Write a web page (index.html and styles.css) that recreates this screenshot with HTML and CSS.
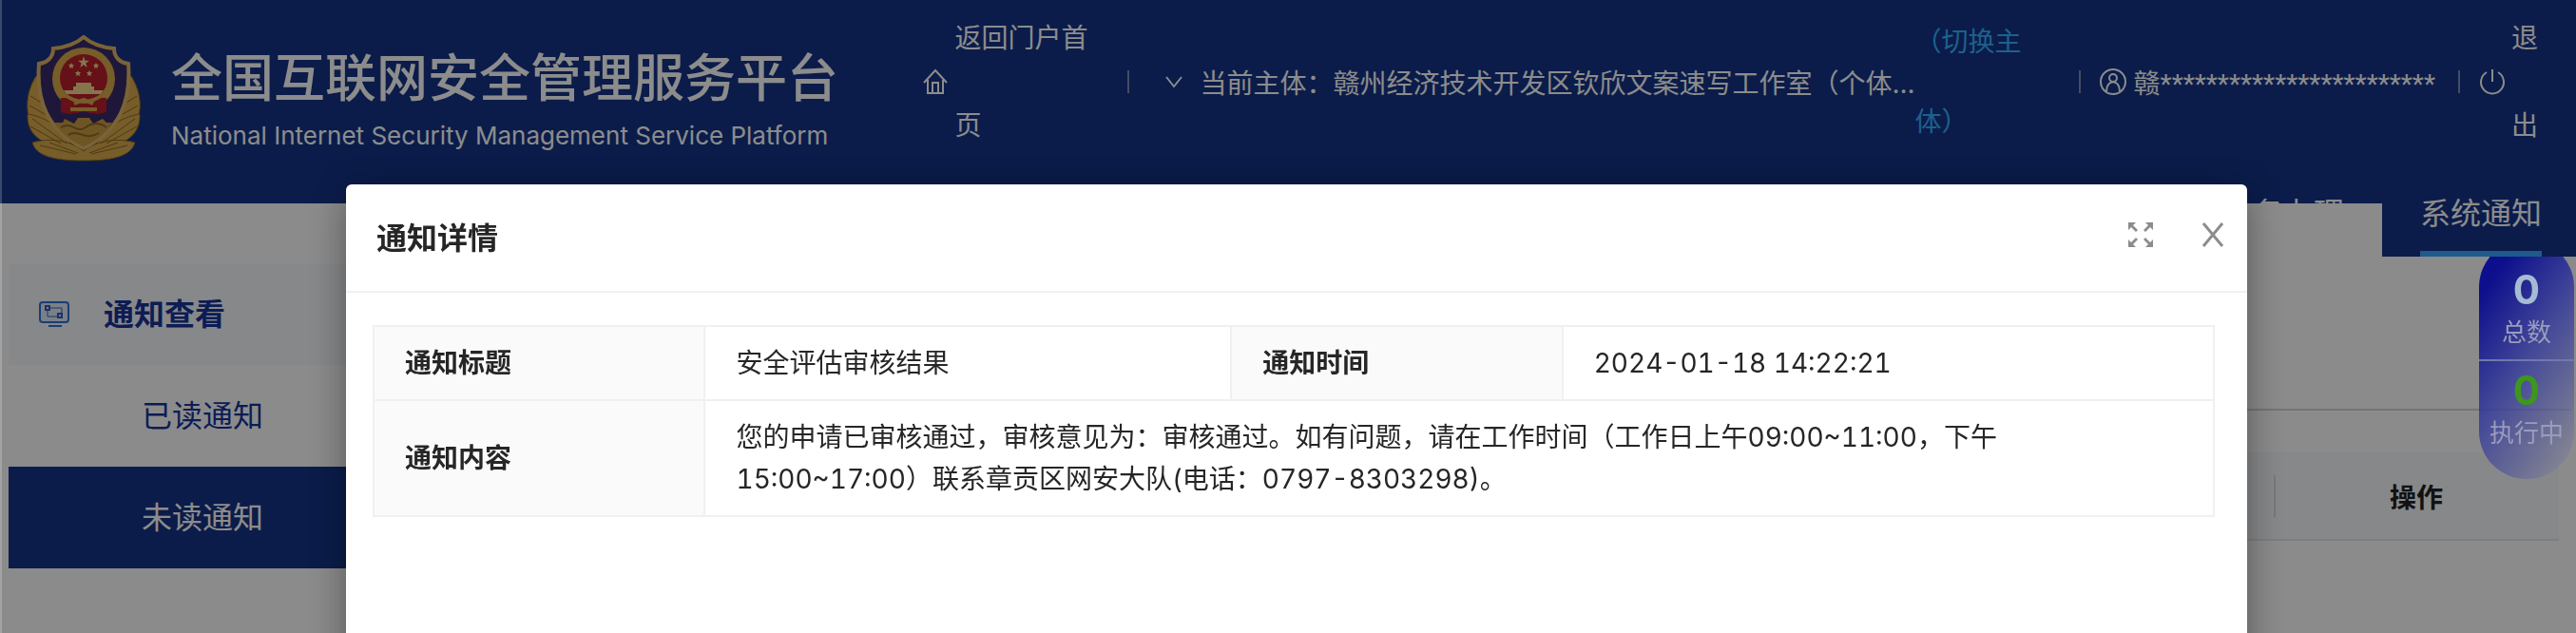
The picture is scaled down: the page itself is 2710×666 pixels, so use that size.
FILE: index.html
```html
<!DOCTYPE html>
<html lang="zh-CN">
<head>
    <meta charset="UTF-8">
    <meta name="viewport" content="width=device-width, initial-scale=1.0">
    <title>全国互联网安全管理服务平台</title>
    <link rel="stylesheet" href="styles.css">
</head>
<body>
    <header class="header">
        <div class="brand">
            <svg class="emblem" viewBox="0 0 120 134">
                <!-- wheat ears -->
                <g fill="#d9a94c" stroke="#8f6a25" stroke-width="1">
                    <path d="M10 43 C-2 62 -2 84 8 98 L40 112 L22 46 Z"/>
                    <path d="M110 43 C122 62 122 84 112 98 L80 112 L98 46 Z"/>
                    <path d="M1 83 C0 104 14 116 50 121 C40 100 22 86 1 83 Z"/>
                    <path d="M119 83 C120 104 106 116 70 121 C80 100 98 86 119 83 Z"/>
                    <path d="M6 113 C22 108 46 110 60 122 C74 110 98 108 114 113 C110 127 92 132 60 132 C28 132 10 127 6 113 Z"/>
                    <path d="M14 116 L52 125 M24 113 L54 124 M106 116 L68 125 M96 113 L66 124 M6 88 L42 114 M4 96 L36 114 M114 88 L78 114 M116 96 L84 114 M4 64 L20 74 M3 74 L24 86 M116 64 L100 74 M117 74 L96 86" fill="none"/>
                </g>
                <!-- shield -->
                <path d="M60 2 C68 9 80 13 92 14 C92 23 98 29 107 30 C110 70 98 100 60 119 C22 100 10 70 13 30 C22 29 28 23 28 14 C40 13 52 9 60 2 Z" fill="#392a6b" stroke="#dfb564" stroke-width="4"/>
                <path d="M29 92 L38 92 L40 88 L50 93 L54 87 L66 87 L70 93 L80 88 L84 92 L90 92 C83 103 73 112 60 117 C47 112 36 103 29 92 Z" fill="#c99b43"/>
                <path d="M36 97 C48 90 52 104 62 97 S80 94 84 97 M44 105 C54 98 62 112 76 103" fill="none" stroke="#8f6a25" stroke-width="2"/>
                <!-- national emblem -->
                <circle cx="60" cy="46" r="33" fill="#d9a94c"/>
                <path d="M36 66 H84 V81 Q72 85 60 80 Q48 85 36 81 Z" fill="#b8202a"/>
                <circle cx="60" cy="45" r="25" fill="#b8202a"/>
                <g fill="#f3d68a">
                    <path d="M60 22 L61.400 26.700 L66 26.700 L62.300 29.500 L63.700 34 L60 31.200 L56.300 34 L57.700 29.500 L54 26.700 L58.600 26.700 Z"/>
                    <path d="M47 29 L48 31 L50 31 L48.500 33 L49 35 L47 34 L45 35 L45.500 33 L44 31 L46 31 Z"/>
                    <path d="M73 29 L74 31 L76 31 L74.500 33 L75 35 L73 34 L71 35 L71.500 33 L70 31 L72 31 Z"/>
                    <path d="M54 37 L55 39 L57 39 L55.500 41 L56 43 L54 42 L52 43 L52.500 41 L51 39 L53 39 Z"/>
                    <path d="M66 37 L67 39 L69 39 L67.500 41 L68 43 L66 42 L64 43 L64.500 41 L63 39 L65 39 Z"/>
                    <path d="M52 50 H68 V54 H71 V58 H81 L78 62 H42 L39 58 H49 V54 H52 Z"/>
                </g>
                <path d="M39 62 Q60 78 81 62 M46 78 H74 M50 72 L60 68 L70 72" fill="none" stroke="#d9a94c" stroke-width="4"/>
            </svg>
            <div class="brand-text">
                <h1>全国互联网安全管理服务平台</h1>
                <p>National Internet Security Management Service Platform</p>
            </div>
        </div>
        <div class="user-bar">
            <a class="home" href="#">
                <svg class="icon" viewBox="0 0 28 28"><path d="M2 15 L14 2 L26 15 M6 12 V26 H22 V12 M11 26 V15 H17 V26"/></svg>
                <span>返回门户首页</span>
            </a>
            <span class="divider"></span>
            <div class="subject">
                <svg class="icon icon-down" viewBox="0 0 18 14"><path d="M1 2 L9 12 L17 2"/></svg>
                <span class="subject-name">当前主体：赣州经济技术开发区钦欣文案速写工作室（个体...</span>
                <a class="switch" href="#">（切换主体）</a>
            </div>
            <span class="divider"></span>
            <div class="account">
                <svg class="icon" viewBox="0 0 28 28"><circle cx="14" cy="14" r="13"/><circle cx="14" cy="10" r="4"/><path d="M7 24 C7 11 21 11 21 24"/></svg>
                <span>赣************************</span>
            </div>
            <span class="divider"></span>
            <a class="logout" href="#">
                <svg class="icon" viewBox="0 0 28 28"><path d="M14 1 V14 M8 4 A12 12 0 1 0 20 4"/></svg>
                <span>退出</span>
            </a>
        </div>
    </header>
    <nav class="tabs">
        <a class="tab" href="#">业务办理</a>
        <a class="tab active" href="#">系统通知</a>
    </nav>

    <div class="main">
        <aside class="sidebar">
            <div class="menu-title">
                <svg class="menu-icon" viewBox="0 0 32 28">
                    <rect x="1" y="1" width="30" height="21" rx="3" fill="#dfe9f8" stroke="#2f6fd6" stroke-width="2"/>
                    <path d="M10 25 H24 V27 H10 Z" fill="#2f6fd6"/>
                    <path d="M11 7 H24 V13 M9 9 V16 H20" fill="none" stroke="#3f63a8" stroke-width="1"/>
                    <path d="M7 5 H11 V9 H7 Z M20 13 H24 V17 H20 Z" fill="#dfe9f8" stroke="#2f5fb8" stroke-width="2"/>
                </svg>
                <span>通知查看</span>
            </div>
            <a class="menu-item" href="#">已读通知</a>
            <a class="menu-item selected" href="#">未读通知</a>
        </aside>
        <section class="content">
            <div class="filter"></div>
            <table class="list">
                <tr><th></th><th class="action">操作</th></tr>
            </table>
        </section>
    </div>

    <div class="mask"></div>

    <div class="counter">
        <div class="count total"><b>0</b><span>总数</span></div>
        <div class="count running"><b>0</b><span>执行中</span></div>
    </div>

    <div class="modal" role="dialog" aria-labelledby="modalTitle">
        <div class="modal-header">
            <h2 id="modalTitle">通知详情</h2>
            <button type="button" aria-label="全屏">
                <svg viewBox="0 0 28 28"><path d="M1 1 H9 L6 4 L11 9 L9 11 L4 6 L1 9 Z M27 1 V9 L24 6 L19 11 L17 9 L22 4 L19 1 Z M1 27 V19 L4 22 L9 17 L11 19 L6 24 L9 27 Z M27 27 H19 L22 24 L17 19 L19 17 L24 22 L27 19 Z" fill="#8c8c8c"/></svg>
            </button>
            <button type="button" aria-label="关闭">
                <svg viewBox="0 0 28 28"><path d="M4 2 L24 26 M24 2 L4 26" fill="none" stroke="#8c8c8c" stroke-width="3"/></svg>
            </button>
        </div>
        <div class="modal-body">
            <table class="detail">
                <tr>
                    <th>通知标题</th>
                    <td>安全评估审核结果</td>
                    <th>通知时间</th>
                    <td>2024-01-18 14:22:21</td>
                </tr>
                <tr>
                    <th>通知内容</th>
                    <td colspan="3">您的申请已审核通过，审核意见为：审核通过。如有问题，请在工作时间（工作日上午09:00~11:00，下午<br>15:00~17:00）联系章贡区网安大队(电话：0797-8303298)。</td>
                </tr>
            </table>
        </div>
    </div>
</body>
</html>
```
FILE: styles.css
```css
* {
    box-sizing: border-box;
}
body {
    margin: 0;
    min-height: 100vh;
    overflow: hidden;
    font-family: Inter, "Noto Sans CJK SC", sans-serif;
    font-size: 28px;
    color: #262626;
    background-color: #fefefe;
}
a {
    color: inherit;
    text-decoration: none;
}
h1, h2, p {
    margin: 0;
}

/* header */
.header {
    display: flex;
    justify-content: space-between;
    height: 214px;
    padding: 0 40px 0 28px;
    color: #fff;
    background-color: #143387;
}
.brand {
    display: flex;
    gap: 32px;
    padding-top: 37px;
}
.emblem {
    width: 120px;
    height: 134px;
}
.brand-text h1 {
    margin-top: 8px;
    font-size: 54px;
    font-weight: 500;
    line-height: 76px;
    white-space: nowrap;
}
.brand-text p {
    font-size: 26px;
    line-height: 44px;
    white-space: nowrap;
}
.user-bar {
    display: flex;
    align-items: center;
    height: 172px;
}
.user-bar > * {
    flex: none;
}
.icon {
    flex: none;
    width: 28px;
    height: 28px;
    fill: none;
    stroke: #fff;
    stroke-width: 2;
}
.icon-down {
    width: 18px;
    height: 14px;
}
.divider {
    width: 2px;
    height: 24px;
    background-color: #7f8db5;
}
.home, .subject, .account, .logout {
    display: flex;
    align-items: center;
}
.home {
    gap: 6px;
    width: 216px;
    line-height: 92px;
}
.home span {
    width: 150px;
}
.subject {
    gap: 18px;
    padding: 0 56px 0 38px;
    white-space: nowrap;
}
.switch {
    width: 116px;
    margin-left: -18px;
    line-height: 84px;
    color: #38b0ff;
    white-space: normal;
}
.account {
    gap: 8px;
    padding: 0 24px 0 20px;
    font-family: Roboto, "Noto Sans CJK SC", sans-serif;
}
.logout {
    gap: 6px;
    padding-left: 20px;
}
.logout span {
    width: 28px;
    line-height: 92px;
}

/* tabs hang below the header */
.tabs {
    display: flex;
    justify-content: flex-end;
    height: 90px;
    margin-top: -34px;
    font-size: 32px;
    line-height: 90px;
    color: #fff;
}
.tab {
    padding: 0 40px;
}
.tab.active {
    padding-right: 36px;
    background-color: #143387;
    background-image: linear-gradient(#38a6ff, #38a6ff);
    background-repeat: no-repeat;
    background-position: 40px 100%;
    background-size: 128px 6px;
}

/* page */
.main {
    display: flex;
    gap: 20px;
    padding-left: 9px;
}
.sidebar {
    width: 400px;
    padding-top: 7px;
    font-size: 32px;
    line-height: 107px;
    color: #19349a;
}
.menu-title {
    display: flex;
    align-items: center;
    gap: 36px;
    padding-left: 32px;
    font-weight: 600;
    background-color: #f4f8fc;
}
.menu-icon {
    width: 32px;
    height: 28px;
}
.menu-item {
    display: block;
    padding-left: 140px;
}
.menu-item.selected {
    color: #fff;
    background-color: #143387;
}
.content {
    flex: 1;
    padding-right: 5px;
}
.filter {
    height: 162px;
    border-bottom: 2px solid #d4d4d4;
}
.list {
    width: calc(100% - 13px);
    margin-top: 44px;
    border-collapse: collapse;
    color: #222;
    background-color: #f4f8fc;
}
.list th {
    height: 92px;
    padding: 0;
    font-weight: 600;
    border-bottom: 2px solid #e2e6ea;
}
.list .action {
    width: 300px;
    background: linear-gradient(#d9dde1, #d9dde1) no-repeat 0 50% / 2px 44px;
}
.mask {
    position: fixed;
    inset: 0;
    border-left: 2px solid rgba(255, 255, 255, 0.2);
    background-color: rgba(0, 0, 0, 0.45);
}

/* floating task counter, tucked under the active tab */
.counter {
    position: fixed;
    top: 252px;
    right: 2px;
    width: 100px;
    height: 252px;
    border-radius: 50px;
    background: linear-gradient(125deg, rgba(6, 8, 140, 0.95) 15%, rgba(50, 56, 155, 0.8) 50%, rgba(120, 122, 150, 0.6) 90%);
    clip-path: inset(18px 0 0 0);
    text-align: center;
}
.count {
    display: flex;
    flex-direction: column;
    font-size: 26px;
    line-height: 45px;
    color: #9a9cbc;
}
.count b {
    font-size: 42px;
}
.total {
    padding: 30px 0 6px;
    border-bottom: 2px solid #7278ae;
}
.total b {
    color: #a5bbd3;
}
.running {
    padding-top: 8px;
}
.running b {
    color: #3f961e;
}

/* modal */
.modal {
    position: fixed;
    top: 194px;
    right: 346px;
    bottom: -40px;
    left: 364px;
    border-radius: 6px;
    background-color: #fff;
    box-shadow: 0 8px 40px rgba(0, 0, 0, 0.4);
}
.modal-header {
    display: flex;
    align-items: center;
    gap: 48px;
    height: 114px;
    padding: 0 22px 0 32px;
    border-bottom: 2px solid #f0f0f0;
}
.modal-header h2 {
    flex: 1;
    padding-bottom: 4px;
    font-size: 32px;
    font-weight: 600;
}
.modal-header button {
    padding: 0 0 6px;
    border: none;
    background: none;
    cursor: pointer;
}
.modal-header svg {
    display: block;
    width: 28px;
    height: 28px;
}
.modal-body {
    padding: 34px 34px 34px 28px;
}
.detail {
    width: 100%;
    table-layout: fixed;
    border-collapse: collapse;
    line-height: 44px;
    text-align: left;
    font-variant-numeric: tabular-nums;
}
.detail th, .detail td {
    padding: 16px 32px;
    border: 2px solid #f0f0f0;
}
.detail th {
    width: 18%;
    font-weight: 600;
    background-color: #fafafa;
}
.detail td:last-child {
    width: 35.4%;
}
```
